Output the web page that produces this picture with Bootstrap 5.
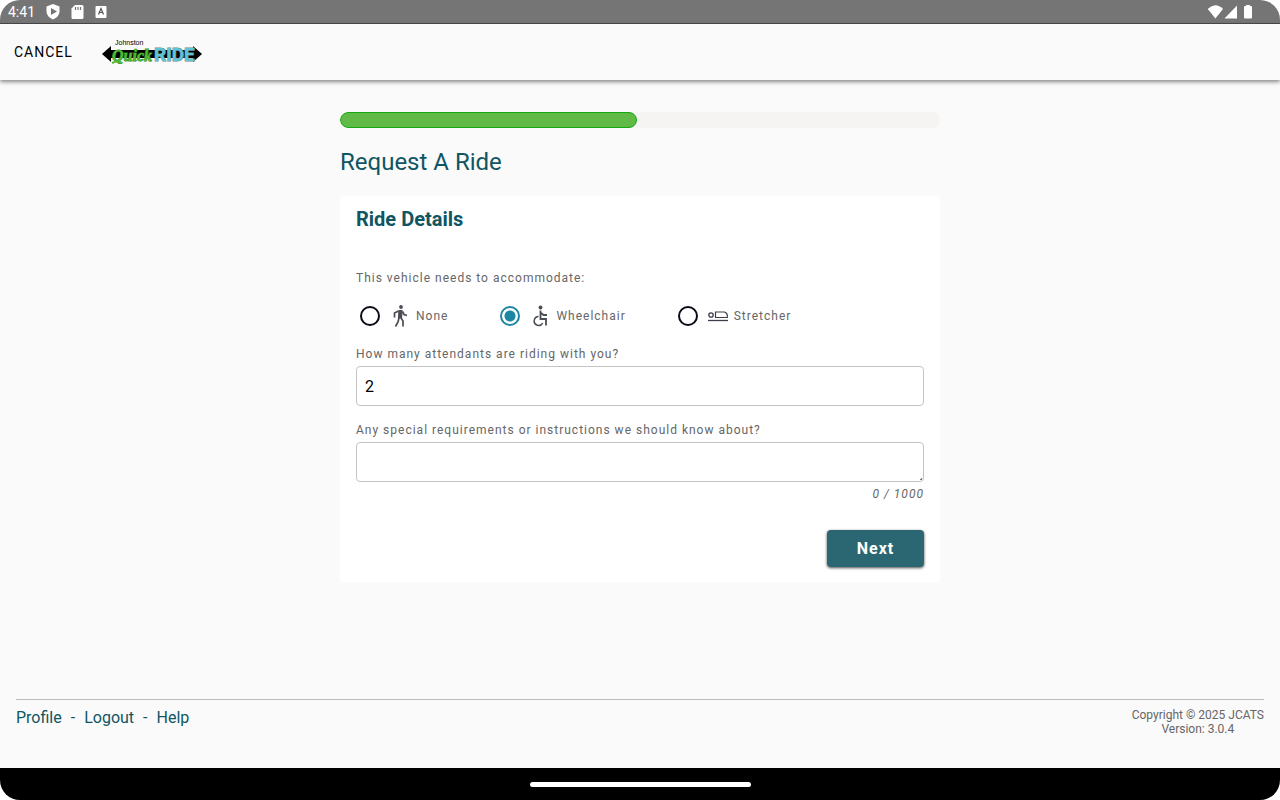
<!DOCTYPE html>
<html lang="en">
<head>
<meta charset="utf-8">
<meta name="viewport" content="width=device-width, initial-scale=1">
<title>Request A Ride</title>
<link rel="stylesheet" href="https://cdn.jsdelivr.net/npm/bootstrap@5.3.0/dist/css/bootstrap.min.css">
<style>
  :root { --teal: #0f5562; --ink: #666; }
  html { background: #fff; }
  body { font-family: Roboto, "Liberation Sans", sans-serif; background: #fff; color: var(--ink); }
  .device { background: #fafafa; border-radius: 20px; overflow: hidden; }
  .status-bar { height: 24px; background: #757575; border-bottom: 1px solid #4a4a4a; color: #fff; font-size: 14px; line-height: 24px; padding: 0 24px 0 8px; }
  .status-bar svg { display: block; }
  .app-bar { height: 56px; padding: 0 14px; gap: 29px; box-shadow: 0 2px 4px rgba(0,0,0,.45); z-index: 1; }
  .btn-cancel { font-size: 14px; letter-spacing: 1px; line-height: 20px; color: #000; padding: 0; border: 0; }
  .ride-flow { max-width: 632px; padding: 32px 16px 16px; }
  .progress { --bs-progress-height: 16px; --bs-progress-bg: #f5f4f2; border-radius: 8px; }
  .progress-bar { background: #5fbb46; border: 1px solid #12a812; border-radius: 8px; }
  h1 { font-size: 24px; line-height: 32px; font-weight: 400; color: var(--teal); margin: 18px 0; }
  .ride-card { background: #fff; border: 0; border-radius: 4px; padding: 10px 16px 15px; }
  h2 { font-size: 20px; line-height: 26px; font-weight: 700; color: var(--teal); margin: 0 0 38px; }
  .field-text { font-size: 12px; line-height: 16px; letter-spacing: 1px; color: var(--ink); margin: 0; }
  .options { gap: 52px; padding: 0 4px; margin: 19px 0; }
  .options .form-check-input { width: 20px; height: 20px; margin: 0 10px 0 0; border: 2px solid #0b0b18; background: #fff; flex: none; }
  .options .form-check-input:checked { border-color: #1b87a0; background: radial-gradient(circle, #1b87a0 0 5px, #fff 6px); }
  .options svg { margin-right: 6px; }
  .ride-card .form-control { height: 40px; border: 1px solid #c4c4c4; border-radius: 4px; padding: 7px 8px; font-size: 16px; line-height: 24px; color: #000; margin-top: 4px; }
  .ride-card textarea::-webkit-resizer { background: radial-gradient(circle at 90% 90%, #777 0 1px, transparent 1px); }
  .counter { font-style: italic; margin-top: 4px; }
  .btn-next { background: #2a6772; color: #fff; width: 97px; height: 37px; padding: 0; border: 0; border-radius: 4px; font-size: 16px; font-weight: 700; letter-spacing: 1px; margin-top: 28px; box-shadow: 0 1px 3px rgba(0,0,0,.7); }
  .btn-next:hover { background: #215560; color: #fff; }
  footer { margin: 0 16px; padding: 8px 0 32px; border-top: 1px solid #bcbcbc; }
  .links { font-size: 16px; line-height: 20px; color: var(--teal); gap: 9px; }
  .links a { color: var(--teal); text-decoration: none; }
  .legal { font-size: 12px; line-height: 14px; }
  .gesture-bar { height: 32px; background: #000; }
  .gesture-bar span { width: 221px; height: 5px; border-radius: 3px; background: #fff; }
</style>
</head>
<body>
<div class="device min-vh-100 d-flex flex-column">
  <div class="status-bar d-flex align-items-center justify-content-between">
    <div class="d-flex align-items-center">
      <span>4:41</span>
      <svg class="ms-2" width="72" height="24" viewBox="0 0 72 24" fill="#fff" aria-hidden="true">
        <path d="M10 4 16.500 6.500V11c0 4-2.700 7-6.500 8.500C6.200 18 3.500 15 3.500 11V6.500Z"/><path d="m8 8 6 3.500L8 15Z" fill="#757575"/>
        <path d="M32 5h7q1.500 0 1.500 1.500v11q0 1.500-1.500 1.500h-9q-1.500 0-1.500-1.500V8.500Z"/><path d="M32.500 7v3m2.500-3v3m2.500-3v3" stroke="#757575" stroke-width="1.200"/>
        <rect x="52.500" y="6" width="11" height="12" rx="1"/><path d="m55.500 14.500 2.500-6 2.500 6m-4-2h3" stroke="#555" fill="none" stroke-width="1.200"/>
      </svg>
    </div>
    <svg width="48" height="24" viewBox="0 0 48 24" fill="#fff" aria-hidden="true">
      <path d="M-.2 9q7.500-7.500 15.200 0l-7.600 9.500Z"/><path d="M29 5.500v13H16.500Z"/>
      <path d="M38 5h4v1h1q1 0 1 1v10.500q0 1-1 1h-6q-1 0-1-1V7q0-1 1-1h1Z"/>
    </svg>
  </div>

  <header class="app-bar d-flex align-items-center">
    <button type="button" class="btn btn-cancel">CANCEL</button>
    <svg width="100" height="32" viewBox="0 0 100 32" role="img" aria-label="Johnston Quick Ride">
      <path d="M0 18 9 10v4h82v-4l9 8-9 8v-4H9v4Z" fill="#000"/>
      <text x="13" y="9" font-family="Liberation Sans" font-size="7" fill="#000">Johnston</text>
      <text x="10" y="25" font-family="Liberation Serif" font-size="16" font-style="italic" font-weight="700" fill="#4fb835" stroke="#2f8a1d" stroke-width="1" paint-order="stroke">Quick</text>
      <path d="M10 27q6-3 10 0" stroke="#4fb835" stroke-width="2" fill="none"/>
      <text x="52" y="25" font-family="Roboto" font-size="19" font-weight="700" fill="#5bc4d8" stroke="#6d8a90" stroke-width="1" paint-order="stroke">RIDE</text>
    </svg>
  </header>

  <main class="ride-flow container flex-grow-1">
    <div class="progress" role="progressbar" aria-label="Request progress" aria-valuenow="49" aria-valuemin="0" aria-valuemax="100">
      <div class="progress-bar" style="width:49.5%"></div>
    </div>
    <h1>Request A Ride</h1>
    <form class="ride-card card">
      <h2>Ride Details</h2>
      <p class="field-text" id="accommodate">This vehicle needs to accommodate:</p>
      <div class="options d-flex flex-wrap" role="radiogroup" aria-labelledby="accommodate">
        <div class="d-flex align-items-center">
          <input class="form-check-input" type="radio" name="need" id="need-none">
          <label class="field-text d-flex align-items-center" for="need-none">
            <svg width="20" height="22" viewBox="-2 0 20 22" fill="none" stroke="#4b4d55" aria-hidden="true"><circle cx="9" cy="2" r="1.900" fill="#4b4d55" stroke="none"/><path d="M7 5.500h3l-.5 7.500H6.500Z" fill="#4b4d55" stroke-width="1.200"/><path d="M6.500 6 2.500 8v4.500M10.500 6.500l1.500 3 3 1M7 13l-1 4-2.500 4.500M9 13l2 3v5.500" stroke-width="1.700"/></svg>
            None</label>
        </div>
        <div class="d-flex align-items-center">
          <input class="form-check-input" type="radio" name="need" id="need-wheelchair" checked>
          <label class="field-text d-flex align-items-center" for="need-wheelchair">
            <svg width="20" height="22" viewBox="-2 0 20 22" fill="none" stroke="#4b4d55" aria-hidden="true"><circle cx="8.500" cy="2.500" r="1.900" fill="#4b4d55" stroke="none"/><path d="M8.500 5.500v8.500H14v6.500M8.500 7.500l3 2.500H15" stroke-width="1.800"/><path d="M6.500 11.500a4.500 4.500 0 1 0 4.200 6.500" stroke-width="1.500"/></svg>
            Wheelchair</label>
        </div>
        <div class="d-flex align-items-center">
          <input class="form-check-input" type="radio" name="need" id="need-stretcher">
          <label class="field-text d-flex align-items-center" for="need-stretcher">
            <svg width="20" height="22" viewBox="0 0 20 22" fill="none" stroke="#3c3e4a" aria-hidden="true"><circle cx="3" cy="10" r="2.200" stroke-width="1.300"/><path d="M7.500 7h9q2.800 1 2.800 3.500v2H7.500Z" stroke-width="1.200"/><path d="M0 15.500h20" stroke-width="1.300"/></svg>
            Stretcher</label>
        </div>
      </div>
      <label class="field-text" for="attendants">How many attendants are riding with you?</label>
      <input class="form-control" id="attendants" type="text" inputmode="numeric" value="2">
      <label class="field-text mt-3" for="notes">Any special requirements or instructions we should know about?</label>
      <textarea class="form-control" id="notes" rows="1" maxlength="1000"></textarea>
      <div class="field-text counter text-end">0 / 1000</div>
      <button type="button" class="btn btn-next align-self-end">Next</button>
    </form>
  </main>

  <footer class="d-flex justify-content-between">
    <nav class="links d-flex" aria-label="Account">
      <a href="#profile">Profile</a><span>-</span><a href="#logout">Logout</a><span>-</span><a href="#help">Help</a>
    </nav>
    <div class="legal text-center">Copyright © 2025 JCATS<br>Version: 3.0.4</div>
  </footer>
  <div class="gesture-bar d-flex align-items-center justify-content-center"><span></span></div>
</div>
<script src="https://cdn.jsdelivr.net/npm/bootstrap@5.3.0/dist/js/bootstrap.bundle.min.js"></script>
</body>
</html>
